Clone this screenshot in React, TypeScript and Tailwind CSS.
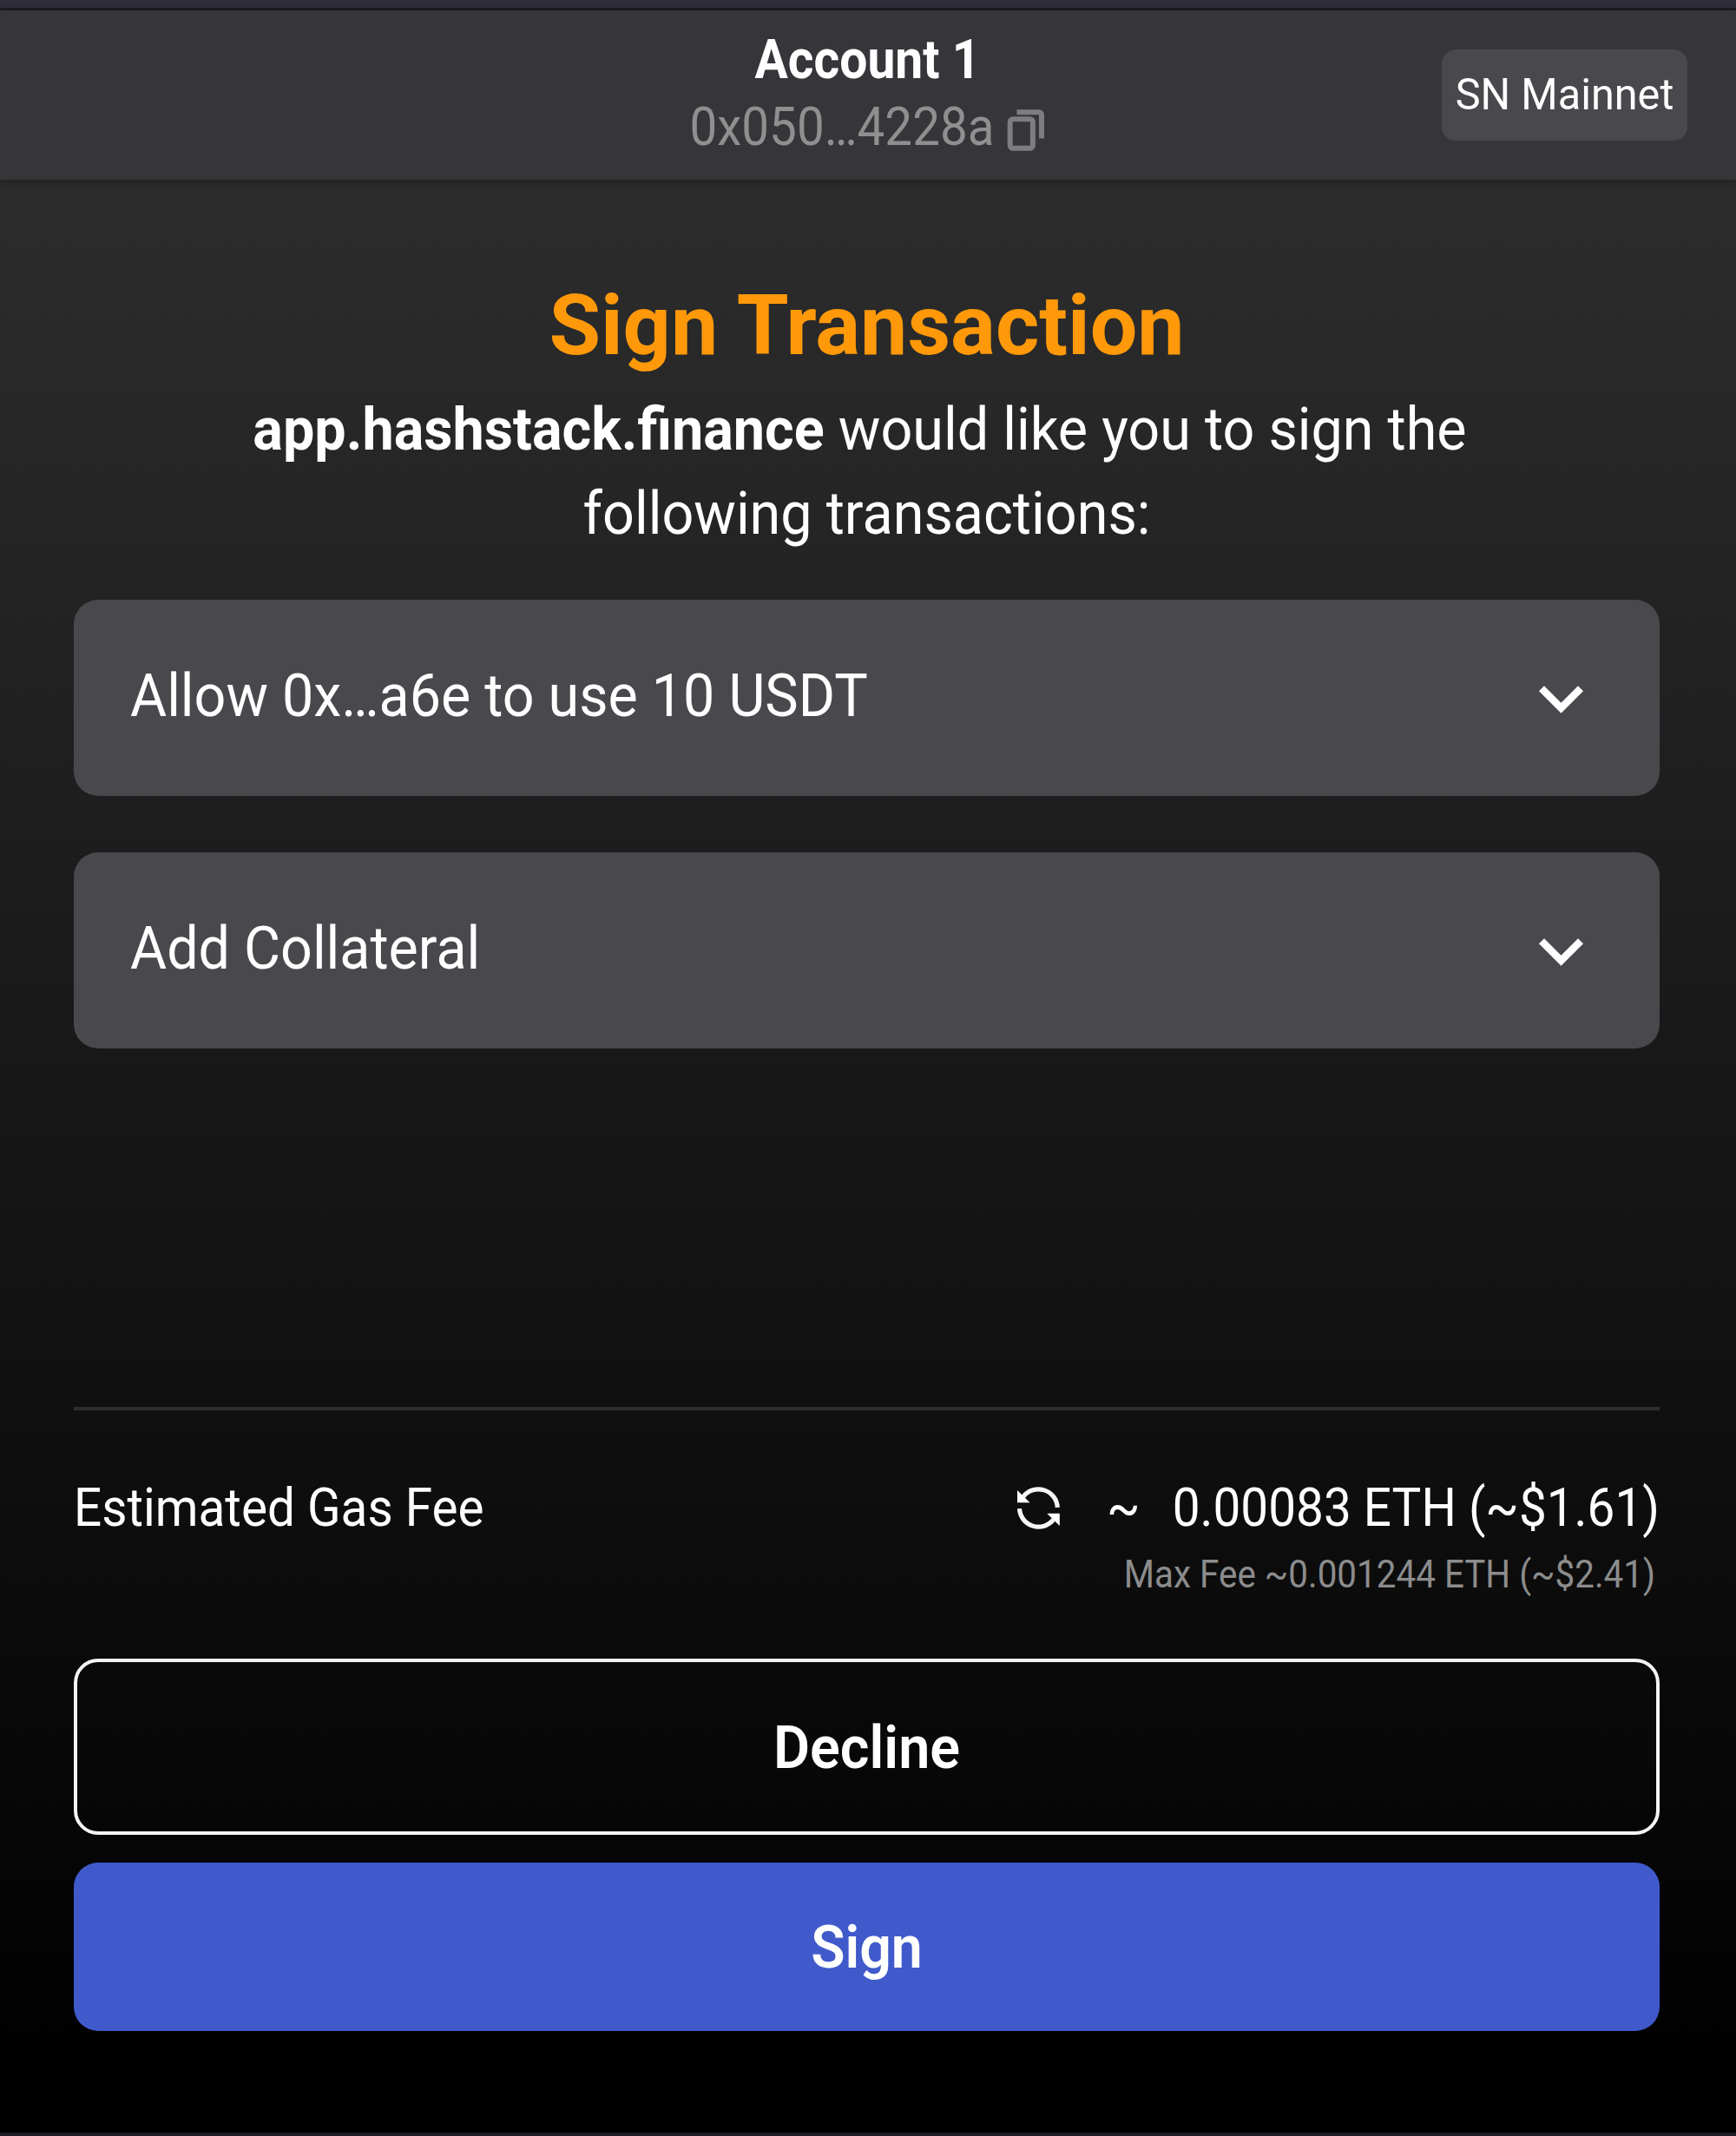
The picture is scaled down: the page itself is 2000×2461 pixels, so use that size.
import React from "react";

function CopyIcon() {
  return (
    <svg className="h-[49px] w-[44px] shrink-0" viewBox="0 0 44 49" fill="none">
      <rect x="3.7" y="12.2" width="26.2" height="33.6" rx="3.5" stroke="#7d7d7f" strokeWidth="6" />
      <path d="M11.5 4.3H37a3 3 0 0 1 3 3V34.5" stroke="#7d7d7f" strokeWidth="6" />
    </svg>
  );
}

function RefreshIcon() {
  return (
    <svg className="h-[51px] w-[51px] shrink-0" viewBox="0 0 51 51" fill="none">
      <g>
        <path d="M8 12.3A22 22 0 0 1 47.3 24.8" stroke="#f5f5f5" strokeWidth="5.2" />
        <path d="M1 5V19.3H15.5Z" fill="#ffffff" />
      </g>
      <g transform="rotate(180 25.4 25.5)">
        <path d="M8 12.3A22 22 0 0 1 47.3 24.8" stroke="#f5f5f5" strokeWidth="5.2" />
        <path d="M1 5V19.3H15.5Z" fill="#ffffff" />
      </g>
    </svg>
  );
}

function ChevronIcon() {
  return (
    <svg className="h-[32px] w-[51px] shrink-0" viewBox="6 8.55 12 7.5" fill="#ffffff">
      <path d="M16.59 8.59 12 13.17 7.41 8.59 6 10l6 6 6-6z" />
    </svg>
  );
}

function TransactionCard({ label }: { label: string }) {
  return (
    <div className="flex h-[226px] items-center justify-between rounded-[28px] bg-[#49484d] pr-[88px] pl-[65px]">
      <span className="-mt-[4px] scale-y-105 text-[64.6px] leading-[97px]">{label}</span>
      <div className="mt-[3px]">
        <ChevronIcon />
      </div>
    </div>
  );
}

export default function App() {
  return (
    <div className="flex h-[2461px] w-[2000px] flex-col overflow-hidden bg-[linear-gradient(to_bottom,#313131_0px,#000000_2400px)] font-['Roboto',sans-serif] whitespace-nowrap text-white">
      <div className="h-[12px] shrink-0 border-b-[3px] border-[#1d1c25] bg-[#2f2e39]" />

      <header className="grid h-[195px] shrink-0 grid-cols-[1fr_auto_1fr] bg-[#363539] shadow-[0_2px_10px_rgba(0,0,0,0.35)]">
        <div />
        <div className="flex flex-col items-center pt-[18px]">
          <div className="scale-y-[1.09] pr-px text-[57px] leading-[77px] font-bold">Account 1</div>
          <div className="flex gap-[14px] pr-[2px] text-[#8f8f8f]">
            <span className="scale-y-[1.09] text-[56.6px] leading-[77px]">0x050…4228a</span>
            <div className="mt-[18px]">
              <CopyIcon />
            </div>
          </div>
        </div>
        <div className="flex justify-end pt-[45px] pr-[56px]">
          <div className="flex h-[105px] w-[283px] items-center justify-center rounded-[16px] bg-[#49484c]">
            <span className="-mt-[2px] scale-y-[1.045] text-[48.6px] leading-[60px]">SN Mainnet</span>
          </div>
        </div>
      </header>

      <main className="flex flex-1 flex-col pr-[88px] pl-[85px]">
        <h1 className="mt-[120px] text-center text-[96.8px] leading-[97px] font-bold text-[#ff990a]">Sign Transaction</h1>
        <div className="mt-[23px] text-center text-[64.7px] leading-[96.5px]">
          <p className="scale-y-105 pr-[16px]">
            <b className="font-bold">app.hashstack.finance</b> would like you to sign the
          </p>
          <p className="scale-y-105">following transactions:</p>
        </div>

        <div className="mt-[51px] flex flex-col gap-[65px]">
          <TransactionCard label="Allow 0x…a6e to use 10 USDT" />
          <TransactionCard label="Add Collateral" />
        </div>

        <div className="mt-auto flex flex-col">
          <div className="h-[4px] bg-[#2e2e2e]" />
          <div className="mt-[62px] flex items-center justify-between text-[56.7px] leading-[100px]">
            <span className="scale-y-[1.09]">Estimated Gas Fee</span>
            <div className="flex items-center">
              <div className="mt-px mr-[53px]">
                <RefreshIcon />
              </div>
              <span className="mr-[37px] scale-y-[1.09]">~</span>
              <span className="scale-y-[1.09]">0.00083 ETH (~$1.61)</span>
            </div>
          </div>
          <div className="-mt-[2px] scale-y-[1.11] pr-[5px] text-right text-[40.4px] leading-[60px] text-[#8c8c8c]">
            Max Fee ~0.001244 ETH (~$2.41)
          </div>
          <button className="mt-[66px] flex h-[203px] items-center justify-center rounded-[28px] border-4 border-[#f4f4f4] text-[64.7px] font-semibold">
            <span className="mt-[4px] scale-y-105">Decline</span>
          </button>
          <button className="mt-[32px] mb-[117px] flex h-[194px] items-center justify-center rounded-[28px] bg-[#405acb] text-[64.4px] font-semibold">
            <span className="mt-[3px] scale-y-105">Sign</span>
          </button>
        </div>
      </main>

      <div className="h-[4px] shrink-0 bg-[#1e1d26]" />
    </div>
  );
}
